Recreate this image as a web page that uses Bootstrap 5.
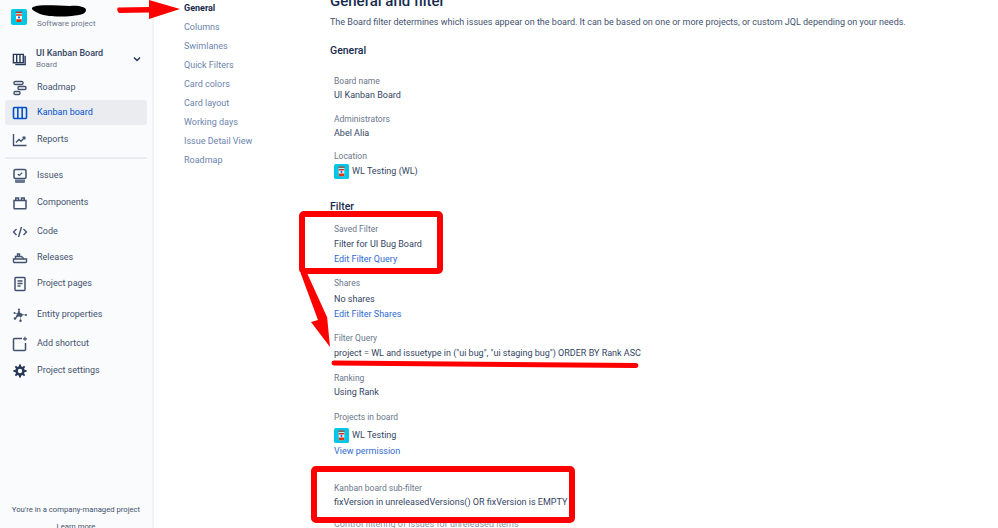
<!DOCTYPE html>
<html lang="en">
<head>
  <meta charset="UTF-8" />
  <meta name="viewport" content="width=device-width, initial-scale=1.0" />
  <title>General and filter</title>
  <link href="https://cdn.jsdelivr.net/npm/bootstrap@5.3.0/dist/css/bootstrap.min.css" rel="stylesheet">
  <style>
    html, body { height: 528px; overflow: hidden; }
    body { font-family: Roboto, "Noto Sans", sans-serif; font-size: 9px; color: #344563; background: #fff; }
    .page-wrap { height: 528px; position: relative; overflow: hidden; }

    /* left sidebar */
    .side-bar { width: 154px; height: 528px; background: #fafbfc; border-right: 2px solid #f1f2f4; flex: none; position: relative; }
    .proj-head { padding: 9px 0 0 11px; height: 43px; gap: 10px; }
    .proj-sub { color: #6b778c; font-size: 8px; line-height: 11px; margin-top: 9px; }
    .board-pick { height: 32px; padding: 0 0 0 12px; gap: 9px; }
    .board-name { font-weight: 500; color: #344563; line-height: 11px; }
    .board-type { color: #6b778c; font-size: 8px; line-height: 11px; }
    .board-caret { margin-right: 11px; }
    .side-row { height: 25px; margin: 0 5px; padding-left: 7px; gap: 9px; color: #42526e; border-radius: 3px; text-decoration: none; }
    .side-row svg { width: 16px; height: 16px; flex: none; }
    .side-row.is-on { background: #ebecf0; color: #0052cc; }
    .side-rule { border-top: 2px solid #ebecf0; margin: 5px 5px 4px; }
    .lift-1 { margin-top: 1px; }
    .lift-2 { margin-top: 2px; }
    .lift-4 { margin-top: 4px; }
    .lift-6 { margin-top: 6px; }
    .side-foot { position: absolute; left: 0; right: 0; top: 504px; text-align: center; color: #42526e; font-size: 7.7px; line-height: 12px; }
    .side-foot div + div { margin-top: 5px; }

    /* settings tabs */
    .tab-col { width: 176px; flex: none; padding: 0 0 0 30px; margin-top: -1px; }
    .tab-col a { display: block; height: 19px; line-height: 19px; color: #6c84ad; text-decoration: none; }
    .tab-col a.is-on { color: #172b4d; font-weight: 700; }

    /* main */
    .main-col { flex: 1; min-width: 0; }
    .page-title { font-size: 15px; font-weight: 500; color: #172b4d; line-height: 20px; margin: -9px 0 0; }
    .page-lead { line-height: 14px; margin: 4px 0 0; color: #42526e; white-space: nowrap; }
    .sect-title { font-size: 10.5px; font-weight: 500; color: #172b4d; line-height: 14px; margin: 15px 0 0; }
    .field-list { padding-left: 4px; }
    .field-item { margin-top: 9px; }
    .field-label { color: #6b778c; font-size: 8.5px; line-height: 15px; }
    .field-value { line-height: 15px; color: #344563; white-space: nowrap; }
    .field-link { display: block; line-height: 15px; color: #2f6bd3; text-decoration: none; }
    .proj-line { gap: 3px; height: 17px; }
    .proj-ico { width: 16px; height: 16px; flex: none; }
    .proj-line .proj-ico { width: 15px; height: 15px; }
    .push-general { margin-top: 16px; }
    .push-location { margin-top: 8px; }
    .push-filter { margin-top: 20px; }
    .push-ten { margin-top: 10px; }
    .push-sub { margin-top: 22px; }
    .nudge-1 { margin-top: 1px; }
    .nudge-2 { margin-top: 2px; }
    .pull-1 { margin-top: -1px; }
    .cut-note { color: #8993a4; line-height: 14px; margin-top: 7px; }

    /* hand-drawn annotations over the shot */
    .mark-up { position: absolute; left: 0; top: 0; width: 998px; height: 528px; pointer-events: none; }
  </style>
</head>
<body>
  <svg width="0" height="0" class="position-absolute">
    <symbol id="proj-logo" viewBox="0 0 16 16">
      <rect width="16" height="16" rx="2" fill="#00c7e6"/>
      <path d="M4.5 4 5 2.6h6l.5 1.4z" fill="#c9372c"/>
      <path d="M4.8 4.6h6.4l-.5 8.4H5.300z" fill="#fff"/>
      <path d="M4.900 5.200h6.200l-.2 1.600H5z" fill="#de350b"/>
      <path d="M5.200 10.200h5.600l-.2 2.800H5.400z" fill="#de350b"/>
      <circle cx="8" cy="8.400" r="1.100" fill="#0065ff"/>
    </symbol>
  </svg>

  <div class="page-wrap d-flex">
    <aside class="side-bar">
      <div class="proj-head d-flex align-items-start">
        <svg class="proj-ico"><use href="#proj-logo"/></svg>
        <div class="proj-sub">Software project</div>
      </div>
      <div class="board-pick d-flex align-items-center">
        <svg width="15" height="15" viewBox="0 0 16 16" fill="none" stroke="#253858" stroke-width="1.500"><path d="M1.500 2.500h10.500v9H1.500zM5 2.500v9M8.500 2.500v9"/><path d="M14 4v9.500H3.500"/></svg>
        <div class="flex-grow-1">
          <div class="board-name">UI Kanban Board</div>
          <div class="board-type">Board</div>
        </div>
        <svg class="board-caret" width="8" height="6" viewBox="0 0 8 6" fill="none" stroke="#253858" stroke-width="1.500"><path d="M1 1.500 4 4.500 7 1.500"/></svg>
      </div>
      <nav class="d-flex flex-column">
        <a class="side-row d-flex align-items-center" href="#">
          <svg viewBox="0 0 16 16" fill="none" stroke="#42526e" stroke-width="1.400"><rect x="2" y="1.500" width="9" height="3" rx="1.200"/><rect x="6" y="6.500" width="8" height="3" rx="1.200"/><rect x="2" y="11.500" width="6" height="3" rx="1.200"/></svg>
          Roadmap
        </a>
        <a class="side-row is-on d-flex align-items-center" href="#">
          <svg viewBox="0 0 16 16" fill="none" stroke="#0052cc" stroke-width="1.600"><rect x="1.500" y="2.500" width="13" height="11" rx="1"/><path d="M5.800 2.500v11M10.200 2.500v11"/></svg>
          Kanban board
        </a>
        <a class="side-row lift-2 d-flex align-items-center" href="#">
          <svg viewBox="0 0 16 16" fill="none" stroke="#42526e" stroke-width="1.400"><path d="M1.500 2v11.500h13"/><path d="M4 10.500 7 7.500 9 9.200 12.500 5.500M10.500 5.200h2.300v2.300"/></svg>
          Reports
        </a>
        <div class="side-rule"></div>
        <a class="side-row d-flex align-items-center" href="#">
          <svg viewBox="0 0 16 16"><rect x="2" y="1.500" width="12" height="9" rx="1.500" fill="none" stroke="#42526e" stroke-width="1.500"/><path d="M5.800 6 7.300 7.400 10.200 4.600" fill="none" stroke="#42526e" stroke-width="1.200"/><path d="M3 11.500h10v2.500a1 1 0 0 1-1 1H4a1 1 0 0 1-1-1z" fill="#6b778c"/></svg>
          Issues
        </a>
        <a class="side-row lift-2 d-flex align-items-center" href="#">
          <svg viewBox="0 0 16 16" fill="none" stroke="#42526e" stroke-width="1.500"><path d="M2 5.500h12v7.500a.8.8 0 0 1-.8.800H2.800a.8.8 0 0 1-.8-.8z"/><path d="M3.800 5.500V3h2.700v2.500M9.500 5.500V3h2.700v2.500"/></svg>
          Components
        </a>
        <a class="side-row lift-4 d-flex align-items-center" href="#">
          <svg viewBox="0 0 16 16" fill="none" stroke="#42526e" stroke-width="1.400"><path d="M4.500 5 1.500 8l3 3M11.500 5l3 3-3 3M9.500 3 6.500 13"/></svg>
          Code
        </a>
        <a class="side-row lift-1 d-flex align-items-center" href="#">
          <svg viewBox="0 0 16 16" fill="none" stroke="#42526e" stroke-width="1.400"><path d="M1.500 9h13v2.500a1 1 0 0 1-1 1h-11a1 1 0 0 1-1-1z"/><path d="M3.500 9V6.500h6L12 9M5.500 6.500V4h2v2.500"/></svg>
          Releases
        </a>
        <a class="side-row lift-1 d-flex align-items-center" href="#">
          <svg viewBox="0 0 16 16" fill="none" stroke="#42526e" stroke-width="1.500"><rect x="3" y="1.500" width="10" height="13" rx="1"/><path d="M5.500 5h5M5.500 7.500h5M5.500 10h3"/></svg>
          Project pages
        </a>
        <a class="side-row lift-6 d-flex align-items-center" href="#">
          <svg viewBox="0 0 16 16" fill="#42526e"><circle cx="8.500" cy="8" r="2"/><circle cx="3" cy="11.500" r="1.300"/><circle cx="2.500" cy="6" r="1"/><circle cx="7" cy="2.500" r="1"/><circle cx="14" cy="8" r="1"/><circle cx="8.500" cy="13.800" r="1.200"/><path d="M3 11.500 8.500 8 7 2.500M2.500 6l6 2h5.500M8.500 8v5.800" stroke="#42526e" stroke-width=".5"/></svg>
          Entity properties
        </a>
        <a class="side-row lift-4 d-flex align-items-center" href="#">
          <svg viewBox="0 0 16 16" fill="none" stroke="#42526e" stroke-width="1.500"><path d="M10 2.500H2.500a1 1 0 0 0-1 1v10a1 1 0 0 0 1 1h10a1 1 0 0 0 1-1V7"/><path d="M13 .8v4M11 2.800h4" stroke-width="1.200"/></svg>
          Add shortcut
        </a>
        <a class="side-row lift-2 d-flex align-items-center" href="#">
          <svg viewBox="0 0 16 16" fill="none" stroke="#253858"><circle cx="8" cy="8" r="3.500" stroke-width="2.600"/><path d="M8 1.500v2.400M8 12.100v2.400M1.500 8h2.400M12.100 8h2.400M3.400 3.400l1.700 1.700M10.900 10.900l1.700 1.700M3.400 12.600l1.700-1.700M10.900 5.100l1.700-1.700" stroke-width="2"/></svg>
          Project settings
        </a>
      </nav>
      <div class="side-foot">
        <div>You're in a company-managed project</div>
        <div>Learn more</div>
      </div>
    </aside>

    <div class="tab-col">
      <a class="is-on" href="#">General</a>
      <a href="#">Columns</a>
      <a href="#">Swimlanes</a>
      <a href="#">Quick Filters</a>
      <a href="#">Card colors</a>
      <a href="#">Card layout</a>
      <a href="#">Working days</a>
      <a href="#">Issue Detail View</a>
      <a href="#">Roadmap</a>
    </div>

    <main class="main-col">
      <h1 class="page-title">General and filter</h1>
      <p class="page-lead">The Board filter determines which issues appear on the board. It can be based on one or more projects, or custom JQL depending on your needs.</p>

      <h2 class="sect-title">General</h2>
      <div class="field-list">
        <div class="field-item push-general">
          <div class="field-label">Board name</div>
          <div class="field-value pull-1">UI Kanban Board</div>
        </div>
        <div class="field-item">
          <div class="field-label">Administrators</div>
          <div class="field-value pull-1">Abel Alia</div>
        </div>
        <div class="field-item push-location">
          <div class="field-label">Location</div>
          <div class="field-value proj-line pull-1 d-flex align-items-center"><svg class="proj-ico"><use href="#proj-logo"/></svg> WL Testing (WL)</div>
        </div>
      </div>

      <h2 class="sect-title push-filter">Filter</h2>
      <div class="field-list">
        <div class="field-item push-location">
          <div class="field-label">Saved Filter</div>
          <div class="field-value">Filter for UI Bug Board</div>
          <a class="field-link" href="#">Edit Filter Query</a>
        </div>
        <div class="field-item">
          <div class="field-label">Shares</div>
          <div class="field-value nudge-1">No shares</div>
          <a class="field-link" href="#">Edit Filter Shares</a>
        </div>
        <div class="field-item">
          <div class="field-label">Filter Query</div>
          <div class="field-value">project = WL and issuetype in ("ui bug", "ui staging bug") ORDER BY Rank ASC</div>
        </div>
        <div class="field-item push-ten">
          <div class="field-label">Ranking</div>
          <div class="field-value pull-1">Using Rank</div>
        </div>
        <div class="field-item push-ten">
          <div class="field-label">Projects in board</div>
          <div class="field-value proj-line nudge-2 d-flex align-items-center"><svg class="proj-ico"><use href="#proj-logo"/></svg> WL Testing</div>
          <a class="field-link" href="#">View permission</a>
        </div>
        <div class="field-item push-sub">
          <div class="field-label">Kanban board sub-filter</div>
          <div class="field-value pull-1">fixVersion in unreleasedVersions() OR fixVersion is EMPTY</div>
          <div class="cut-note">Control filtering of issues for unreleased items</div>
        </div>
      </div>
    </main>

    <svg class="mark-up" viewBox="0 0 998 528">
      <path d="M33 7C42 4 58 6 70 6 78 5 86 7 86 10 86 14 80 15 72 16 60 17 46 17 38 13 34 11 30 9 33 7z" fill="#000"/>
      <path d="M118 7.500 149 7V0L180 9 149 19V12.500L119 13Q116 10 118 7.500z" fill="#f00"/>
      <rect x="302" y="214" width="138" height="57" rx="2" fill="none" stroke="#f00" stroke-width="6"/>
      <path d="M300.600 273H307L327 317 327 316 330 347 311 322 318 320z" fill="#f00"/>
      <path d="M334 363 636 365.500" fill="none" stroke="#f00" stroke-width="5" stroke-linecap="round"/>
      <rect x="314" y="469" width="258" height="51" rx="2" fill="none" stroke="#f00" stroke-width="6"/>
    </svg>
  </div>
  <script src="https://cdn.jsdelivr.net/npm/bootstrap@5.3.0/dist/js/bootstrap.bundle.min.js"></script>
</body>
</html>
